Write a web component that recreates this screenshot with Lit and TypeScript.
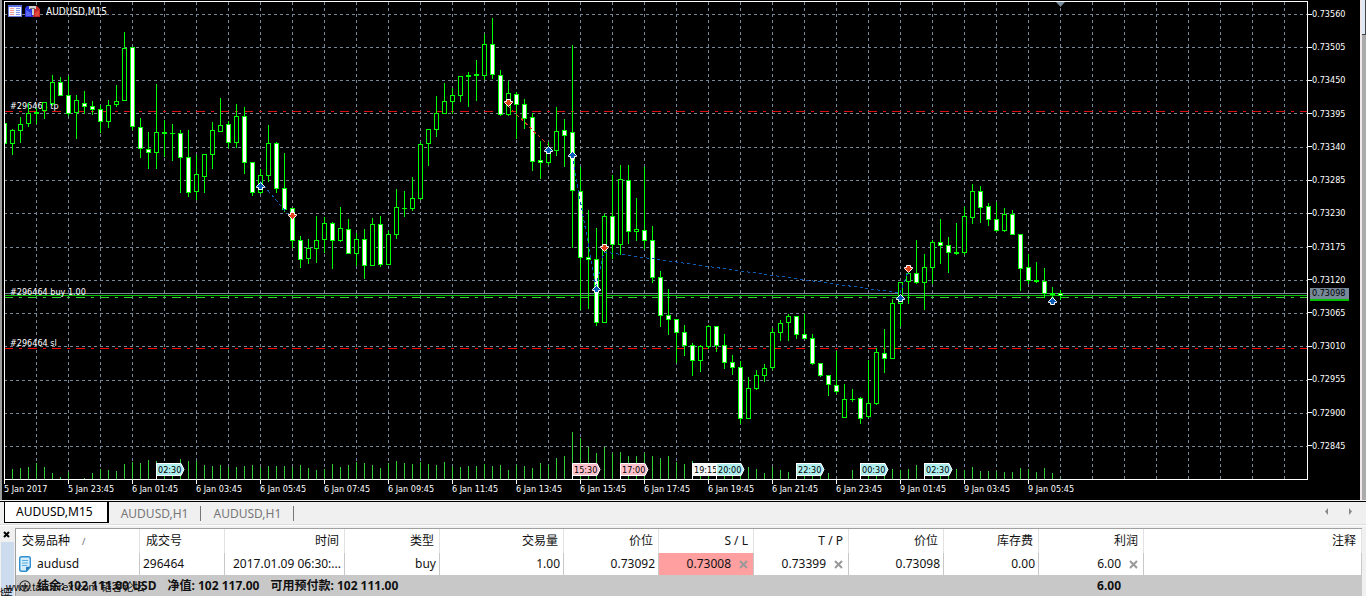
import { LitElement, html, svg, css } from "lit";
import { customElement, state } from "lit/decorators.js";

/** Candle: [high, body top, body bottom, low, kind]; w = bearish, h = bullish, d = doji. */
type Candle = [number, number, number, number, "w" | "h" | "d"];

const CANDLES: Candle[] = [
  [123, 123, 143, 143, "w"], [129, 130, 143, 154, "h"], [117, 124, 130, 142, "h"], [103, 113, 123, 126, "h"],
  [108, 112, 113, 123, "d"], [102, 102, 110, 118, "h"], [75, 82, 103, 105, "h"], [77, 82, 95, 95, "w"],
  [76, 95, 113, 115, "w"], [95, 100, 112, 138, "h"], [91, 103, 106, 113, "w"], [101, 106, 109, 114, "w"],
  [105, 109, 121, 132, "w"], [100, 105, 121, 127, "h"], [85, 101, 104, 106, "h"], [32, 48, 100, 100, "h"],
  [47, 47, 126, 129, "w"], [118, 127, 148, 157, "w"], [132, 149, 152, 168, "w"], [84, 132, 152, 168, "h"],
  [120, 132, 133, 156, "d"], [124, 133, 133, 160, "d"], [130, 133, 157, 192, "w"], [130, 157, 192, 196, "w"],
  [155, 174, 191, 199, "h"], [154, 154, 176, 192, "h"], [122, 130, 154, 168, "h"], [98, 125, 131, 131, "h"],
  [121, 124, 142, 147, "w"], [104, 116, 142, 147, "h"], [107, 116, 162, 173, "w"], [162, 162, 192, 195, "w"],
  [169, 175, 192, 193, "h"], [125, 143, 175, 181, "h"], [142, 143, 188, 192, "w"], [153, 188, 209, 211, "w"],
  [208, 208, 240, 247, "w"], [236, 240, 259, 267, "w"], [239, 248, 258, 263, "h"], [216, 240, 248, 262, "h"],
  [217, 223, 239, 252, "h"], [222, 223, 240, 268, "w"], [207, 228, 240, 241, "h"], [219, 229, 253, 253, "w"],
  [233, 239, 253, 265, "h"], [229, 239, 265, 278, "w"], [218, 224, 265, 265, "h"], [216, 224, 264, 266, "w"],
  [231, 234, 264, 264, "h"], [189, 207, 234, 238, "h"], [191, 208, 208, 216, "d"], [177, 198, 208, 210, "h"],
  [142, 144, 198, 199, "h"], [129, 129, 143, 165, "h"], [96, 113, 129, 136, "h"], [83, 101, 113, 113, "h"],
  [88, 95, 101, 113, "h"], [76, 76, 95, 101, "h"], [72, 75, 76, 106, "d"], [60, 74, 75, 100, "d"],
  [34, 44, 75, 79, "h"], [18, 44, 74, 78, "w"], [70, 75, 114, 115, "w"], [81, 93, 114, 115, "h"],
  [92, 94, 104, 138, "w"], [99, 104, 118, 128, "w"], [113, 117, 161, 170, "w"], [141, 160, 162, 178, "w"],
  [142, 150, 162, 164, "h"], [107, 131, 150, 155, "h"], [119, 130, 135, 166, "w"], [45, 132, 190, 247, "w"],
  [167, 191, 257, 309, "w"], [210, 257, 259, 308, "w"], [228, 259, 322, 325, "w"], [214, 216, 322, 322, "h"],
  [175, 216, 244, 258, "w"], [165, 179, 244, 254, "h"], [165, 180, 231, 243, "w"], [198, 229, 231, 240, "h"],
  [167, 230, 240, 248, "w"], [226, 240, 277, 282, "w"], [271, 277, 315, 326, "w"], [289, 315, 319, 334, "w"],
  [319, 319, 332, 362, "w"], [325, 332, 345, 355, "w"], [343, 345, 360, 375, "w"], [345, 346, 360, 371, "h"],
  [325, 326, 346, 348, "h"], [326, 326, 345, 351, "w"], [334, 345, 362, 368, "w"], [355, 362, 367, 374, "w"],
  [361, 367, 418, 423, "w"], [377, 388, 418, 418, "h"], [370, 375, 388, 389, "h"], [364, 368, 375, 381, "h"],
  [328, 332, 367, 369, "h"], [320, 323, 332, 340, "h"], [314, 316, 322, 340, "h"], [316, 316, 334, 338, "w"],
  [314, 334, 338, 338, "w"], [334, 338, 363, 364, "w"], [363, 363, 375, 376, "w"], [375, 375, 384, 395, "w"],
  [351, 385, 391, 393, "w"], [384, 399, 417, 417, "h"], [389, 399, 399, 401, "d"], [397, 398, 418, 423, "w"],
  [360, 403, 416, 417, "h"], [348, 352, 403, 404, "h"], [329, 353, 358, 372, "w"], [299, 303, 358, 358, "h"],
  [282, 282, 303, 326, "h"], [273, 273, 281, 303, "h"], [240, 273, 282, 283, "w"], [254, 267, 282, 309, "h"],
  [240, 242, 267, 283, "h"], [219, 242, 245, 263, "w"], [237, 245, 252, 272, "w"], [223, 252, 253, 254, "d"],
  [207, 216, 252, 254, "h"], [184, 191, 217, 223, "h"], [186, 191, 207, 222, "w"], [203, 206, 219, 225, "w"],
  [202, 219, 230, 231, "w"], [208, 214, 230, 231, "h"], [210, 214, 234, 234, "w"], [234, 234, 268, 290, "w"],
  [254, 267, 280, 283, "w"], [262, 280, 281, 282, "d"], [268, 281, 293, 297, "w"], [287, 293, 294, 298, "d"],
  [290, 293, 295, 299, "w"],
];

/** Top of each tick-volume bar, from the second candle on. */
const VOLUMES = [
  469, 468, 467, 463, 467, 473, 477, 472, 479, 478, 473, 469, 470, 471, 464, 462, 463, 460, 461, 465, 465, 459, 461,
  461, 465, 466, 465, 467, 467, 466, 465, 467, 466, 466, 466, 467, 465, 468, 470, 469, 464, 467, 465, 462, 463, 465,
  468, 463, 461, 463, 464, 462, 464, 465, 462, 466, 467, 466, 466, 464, 466, 465, 470, 465, 466, 468, 463, 465, 458,
  456, 432, 438, 447, 453, 447, 453, 452, 456, 456, 453, 456, 458, 456, 462, 464, 461, 465, 465, 465, 466, 466, 466,
  467, 469, 473, 467, 470, 472, 470, 470, 470, 476, 473, 479, 479, 470, 470, 470, 470, 470, 469, 470, 469, 465, 468,
  468, 468, 468, 469, 470, 467, 471, 471, 471, 472, 472, 468, 469, 472, 468, 473, 478,
];

const GRID_Y = [14, 47, 80, 113, 147, 180, 213, 247, 280, 313, 346, 380, 413, 446];

const PRICES = [
  "0.73560", "0.73505", "0.73450", "0.73395", "0.73340", "0.73285", "0.73230", "0.73175", "0.73120", "0.73065",
  "0.73010", "0.72955", "0.72900", "0.72845",
];

const TIMES = [
  "5 Jan 2017", "5 Jan 23:45", "6 Jan 01:45", "6 Jan 03:45", "6 Jan 05:45", "6 Jan 07:45", "6 Jan 09:45",
  "6 Jan 11:45", "6 Jan 13:45", "6 Jan 15:45", "6 Jan 17:45", "6 Jan 19:45", "6 Jan 21:45", "6 Jan 23:45",
  "9 Jan 01:45", "9 Jan 03:45", "9 Jan 05:45",
];

const FLAGS: [number, string, string][] = [
  [156, "02:30", "low"], [572, "15:30", "high"], [620, "17:00", "high"], [692, "19:15", "none"],
  [716, "20:00", "low"], [796, "22:30", "low"], [860, "00:30", "low"], [924, "02:30", "low"],
];

const DEALS: [number, number, "buy" | "sell"][] = [
  [260, 186, "buy"], [292, 215, "sell"], [508, 102, "sell"], [548, 150, "buy"], [572, 155, "buy"],
  [596, 289, "buy"], [604, 247, "sell"], [900, 298, "buy"], [908, 268, "sell"], [1052, 301, "buy"],
];

const LINKS: [number, number, number, number, "buy" | "sell"][] = [
  [260, 181, 292, 219, "buy"], [508, 106, 548, 145, "sell"], [572, 155, 596, 287, "buy"],
  [596, 287, 604, 252, "buy"], [604, 252, 900, 293, "buy"], [900, 293, 908, 272, "buy"],
];

const candle = ([high, top, bottom, low, kind]: Candle, i: number) => {
  const x = 4 + i * 8;
  return svg`
    <rect class="wick" x=${x} y=${high} width="1" height=${low - high + 1}></rect>
    ${kind === "d"
      ? svg`<rect class="wick" x=${x - 2} y=${top} width="5" height=${bottom - top + 1}></rect>`
      : svg`<rect class="wick" x=${x - 2} y=${top} width="5" height=${bottom - top + 1}></rect>
          <rect class=${kind === "w" ? "bear" : "bull"} x=${x - 1} y=${top + 1} width="3" height=${bottom - top - 1}></rect>`}`;
};

@customElement("price-chart")
export class PriceChart extends LitElement {
  static styles = css`
    :host { display: block; font: 9px/10px "DejaVu Sans Condensed", "DejaVu Sans", sans-serif; color: #fff; }
    .frame {
      display: grid; grid-template-columns: minmax(0, 1fr) 52px; grid-template-rows: auto 20px;
      background: #000; padding: 1px 0 0 2px; position: relative;
    }
    .plot { display: block; box-sizing: border-box; width: 100%; height: 479px; border: 1px solid #fff; }
    .grid { stroke: #778899; stroke-width: 1; stroke-dasharray: 3 3; }
    .take { stroke: #e01010; stroke-dasharray: 9 6 3 6; }
    .stop { stroke: #ff0000; stroke-dasharray: 9 6 3 6; }
    .entry { stroke: #32cd32; stroke-dasharray: 9 6 3 6; }
    .bid { stroke: #778899; }
    .ask { stroke: #00c000; }
    .wick { fill: #00ff00; }
    .bear { fill: #fff; }
    .bull { fill: #000; }
    .volume { fill: #32cd32; }
    .text { fill: #fff; }
    .title { font-size: 10px; }
    .flag-text { fill: #000; }
    .low { fill: #afeeee; }
    .high { fill: #ffc0cb; }
    .none { fill: #f8f8f8; }
    .flag { stroke: #fff; }
    .pole { fill: #fff; }
    .link { stroke-dasharray: 3 3; fill: none; }
    .link.buy { stroke: #0a5cb4; }
    .link.sell { stroke: #d2401e; }
    .deal { stroke: #fff; stroke-width: 1; }
    .deal.buy { fill: #0a5cb4; }
    .deal.sell { fill: #e0421c; }
    .shift { fill: #778899; }
    .prices { display: flex; flex-direction: column; justify-content: space-between; height: 442px; padding-top: 8px; }
    .price { display: flex; align-items: center; }
    .price::before { content: ""; width: 4px; height: 1px; background: #fff; }
    .now {
      position: absolute; top: 288px; right: 11px; width: 37px; padding-left: 2px; height: 11px; line-height: 11px;
      background: #778899; color: #000; border-bottom: 2px solid #00c000;
    }
    .times { display: grid; grid-auto-flow: column; grid-auto-columns: 64px; overflow: hidden; white-space: nowrap; }
    .time::before { content: ""; display: block; width: 1px; height: 4px; background: #fff; }
  `;

  render() {
    return html`
      <div class="frame">
        <svg class="plot" role="img" aria-label="AUDUSD,M15">
          <g transform="translate(-5 -2)">
            <g shape-rendering="crispEdges">
              ${GRID_Y.map((y) => svg`<line class="grid" x1="4" x2="200%" y1=${y + 0.5} y2=${y + 0.5}></line>`)}
              ${Array.from({ length: 80 }, (_, i) => 36.5 + i * 32).map(
                (x) => svg`<line class="grid" x1=${x} x2=${x} y1="2" y2="479"></line>`
              )}
              ${VOLUMES.map((y, i) => svg`<rect class="volume" x=${12 + i * 8} y=${y} width="1" height=${479 - y}></rect>`)}
              <line class="take" x1="4" x2="200%" y1="111.5" y2="111.5"></line>
              <line class="bid" x1="4" x2="200%" y1="293.5" y2="293.5"></line>
              <line class="ask" x1="4" x2="200%" y1="295.5" y2="295.5"></line>
              <line class="entry" x1="4" x2="200%" y1="297.5" y2="297.5"></line>
              <line class="stop" x1="4" x2="200%" y1="348.5" y2="348.5"></line>
            </g>
            <text class="text" x="10" y="109">#296464 tp</text>
            <text class="text" x="10" y="295">#296464 buy 1.00</text>
            <text class="text" x="10" y="346">#296464 sl</text>
            <g shape-rendering="crispEdges">
              ${CANDLES.map(candle)}
              ${LINKS.map(([x1, y1, x2, y2, side]) => svg`<line class="link ${side}" x1=${x1} y1=${y1} x2=${x2} y2=${y2}></line>`)}
            </g>
            ${DEALS.map(([x, y, side]) => svg`
              <path class="deal ${side}" transform="translate(${x + 0.5} ${y + 0.5}) scale(1 ${side === "buy" ? 1 : -1})"
                d="M0-4 L4 0 V1 H2 V3 H-2 V1 H-4 V0 Z"></path>`)}
            ${FLAGS.map(([x, label, tone]) => svg`
              <rect class="pole" x=${x} y="463" width="1" height="16"></rect>
              <path class="flag ${tone}" d="M${x + 0.5} 463.5 H${x + 25} L${x + 28} 469.5 L${x + 25} 475.5 H${x + 0.5} Z"></path>
              <text class="flag-text" x=${x + 2} y="473">${label}</text>`)}
            <path class="shift" d="M1056 2 H1065 L1060.5 7 Z"></path>
            <g>
              <rect x="8.5" y="5.5" width="13" height="11" fill="#f4f4ff" stroke="#6a7be0"></rect>
              <rect x="8" y="5" width="14" height="2" fill="#5a6ee0"></rect>
              <path d="M10 8.5h4M10 10.5h4M10 12.5h4M10 14.5h4" stroke="#f09a90"></path>
              <path d="M16 8.5h4M16 10.5h4M16 12.5h4M16 14.5h4" stroke="#7f95ee"></path>
            </g>
            <g>
              <path d="M25 8l2-2h6v11h-8z" fill="#2a35e0"></path>
              <path d="M33 6h4l3 3v8h-7z" fill="#c6282a"></path>
              <path d="M26 10l5 3v3h-5z" fill="#5c68f4"></path>
              <path d="M35 13l4-3v6h-4z" fill="#e0483c"></path>
              <path d="M29 6h7v3h-2v6h-2v-6h-3z" fill="#d0d0d0"></path>
              <path d="M30 8.5h5" stroke="#777"></path>
            </g>
            <text class="text title" x="46" y="15">AUDUSD,M15</text>
          </g>
        </svg>
        <div class="prices">${PRICES.map((p) => html`<div class="price">${p}</div>`)}</div>
        <div class="now">0.73098</div>
        <div class="times">${TIMES.map((t) => html`<div class="time">${t}</div>`)}</div>
      </div>
    `;
  }
}

@customElement("trade-terminal")
export class TradeTerminal extends LitElement {
  static styles = css`
    :host { display: flex; font: 12px/20px "Noto Sans", "Noto Sans CJK SC", sans-serif; color: #111; position: relative; overflow: hidden; }
    .side { width: 15px; display: flex; flex-direction: column; overflow: hidden; height: 72px; box-sizing: border-box; padding-top: 1px; }
    .close { border: 0; padding: 0 0 0 3px; background: none; height: 16px; display: flex; align-items: center; }
    .caption { flex: 1; min-height: 0; margin: 0 1px; background: #ccdcee; padding-top: 45px; }
    .caption-text { display: block; width: 12px; line-height: 12px; writing-mode: vertical-rl; text-orientation: sideways; transform: rotate(180deg); white-space: nowrap; }
    .table { flex: 1; min-width: 0; table-layout: fixed; border-collapse: separate; border-spacing: 0; background: #fff; border: 1px solid #a0a0a0; border-width: 1px 0 0 1px; margin: 3px 4px 0 0; width: 0; }
    .c85 { width: 85px; } .c95 { width: 95px; } .c105 { width: 105px; } .c120 { width: 120px; } .c124 { width: 124px; }
    th, td { box-sizing: border-box; padding: 0 3px; text-align: right; font-weight: 400; border-right: 1px solid #e2e2e2; white-space: nowrap; overflow: hidden; }
    th { height: 24px; padding: 0 5px 0 6px; }
    td { height: 20px; border-right-color: #c8c8c8; }
    .left { text-align: left; }
    .sort { padding-left: 12px; font-size: 9px; color: #666; }
    .symbol { display: flex; align-items: center; gap: 6px; }
    .value { display: flex; align-items: center; justify-content: flex-end; gap: 8px; padding-right: 2px; }
    .hit { background: #ff9f9f; }
    .remove { border: 0; background: none; padding: 0; width: 9px; height: 9px; display: block; }
    .icon { display: block; }
    .total { background: #c8c8c8; font-weight: 700; border: 0; height: 22px; }
    .sums { display: flex; align-items: center; gap: 6px; }
    .sum { white-space: nowrap; padding-right: 5px; }
    .profit { padding-right: 23px; }
    .mark { position: absolute; left: 6px; bottom: 0; font: 11px/20px "Liberation Sans", "Noto Sans CJK SC", sans-serif; }
  `;

  private cross() {
    return html`<svg class="icon" width="9" height="9" viewBox="0 0 9 9"><path d="M1 1L8 8M8 1L1 8" stroke="#999" stroke-width="2"></path></svg>`;
  }

  private removable(value: string, label: string) {
    return html`<div class="value"><span>${value}</span><button class="remove" aria-label=${label}>${this.cross()}</button></div>`;
  }

  render() {
    return html`
      <div class="side">
        <button class="close" aria-label="关闭">
          <svg class="icon" width="7" height="7" viewBox="0 0 7 7"><path d="M1 1L6 6M6 1L1 6" stroke="#000" stroke-width="2"></path></svg>
        </button>
        <div class="caption"><span class="caption-text">工具箱</span></div>
      </div>
      <table class="table">
        <colgroup>
          <col class="c124" /><col class="c85" /><col class="c120" /><col class="c95" /><col class="c124" /><col class="c95" />
          <col class="c95" /><col class="c95" /><col class="c95" /><col class="c95" /><col class="c105" /><col />
        </colgroup>
        <thead>
          <tr>
            <th class="left" scope="col">交易品种<span class="sort">/</span></th>
            <th class="left" scope="col">成交号</th>
            ${["时间", "类型", "交易量", "价位", "S / L", "T / P", "价位", "库存费", "利润", "注释"].map(
              (h) => html`<th scope="col">${h}</th>`
            )}
          </tr>
        </thead>
        <tbody>
          <tr>
            <td class="left">
              <div class="symbol">
                <svg class="icon" width="12" height="16" viewBox="0 0 12 16">
                  <path d="M2.5 .7H9.5Q11.3 .7 11.3 2.5V11L7.5 15.3H2.5Q.7 15.3 .7 13.5V2.5Q.7 .7 2.5 .7Z" fill="#d4ecfb" stroke="#2d8fd0" stroke-width="1.4"></path>
                  <path d="M7 15V11.5Q7 10.8 8 10.8H11.5Z" fill="#2478b8"></path>
                  <path d="M3 4.5h6M3 7h6M3 9.5h5" stroke="#58aee0"></path>
                </svg>
                <span>audusd</span>
              </div>
            </td>
            <td class="left">296464</td>
            <td>2017.01.09 06:30:...</td>
            <td>buy</td>
            <td>1.00</td>
            <td>0.73092</td>
            <td class="hit">${this.removable("0.73008", "S / L")}</td>
            <td>${this.removable("0.73399", "T / P")}</td>
            <td>0.73098</td>
            <td>0.00</td>
            <td>${this.removable("6.00", "利润")}</td>
            <td></td>
          </tr>
        </tbody>
        <tfoot>
          <tr>
            <td class="total left" colspan="10">
              <div class="sums">
                <svg class="icon" width="12" height="12" viewBox="0 0 12 12">
                  <circle cx="6" cy="6" r="5.2" fill="none" stroke="#333" stroke-width="1.2"></circle>
                  <path d="M6 3V9M3 6H9" stroke="#333" stroke-width="1.4"></path>
                </svg>
                <span class="sum">结余: 102 111.00 USD</span>
                <span class="sum">净值: 102 117.00</span>
                <span class="sum">可用预付款: 102 111.00</span>
              </div>
            </td>
            <td class="total profit">6.00</td>
            <td class="total"></td>
          </tr>
        </tfoot>
      </table>
      <span class="mark">www.talkforex.com 韬客论坛</span>
    `;
  }
}

@customElement("app-root")
export class AppRoot extends LitElement {
  static styles = css`
    :host { display: block; background: #f0f0f0; }
    .window { display: flex; background: #000; border-left: 2px solid #9c9c9c; }
    .window price-chart { flex: 1; min-width: 0; }
    .scroll { width: 4px; border-left: 2px solid #f0e8e8; background: #ababab; }
    .thumb { height: 34px; background: #dce8f6; border-right: 1px solid #444; border-bottom: 1px solid #444; }
    .rule { height: 1px; background: #000; margin-top: 1px; }
    .strip { border-bottom: 1px solid #ddd; padding-bottom: 1px; box-shadow: 0 1px #fff; }
    .tabs {
      display: flex; align-items: flex-start; height: 21px; background: #f0f0f0;
      font: 12px/19px "Noto Sans", sans-serif; padding: 0 12px 0 4px;
    }
    .tab { font: inherit; border: 0; background: none; color: #777; padding: 0 12px; line-height: 15px; margin-top: 4px; border-right: 1px solid #777; }
    .tab.active { background: #fff; color: #000; border: 1px solid #000; border-width: 0 2px 1px 1px; line-height: 20px; margin: 0; padding: 0 14px 0 11px; }
    .arrows { margin-left: auto; display: flex; gap: 15px; padding-top: 5px; }
    .arrow { border: 0; background: none; padding: 0; width: 8px; height: 9px; }
    .glyph { display: block; }
  `;

  @state() private active = 0;

  private tabs = ["AUDUSD,M15", "AUDUSD,H1", "AUDUSD,H1"];

  render() {
    return html`
      <div class="window">
        <price-chart></price-chart>
        <div class="scroll"><div class="thumb"></div></div>
      </div>
      <div class="rule"></div>
      <div class="strip">
        <div class="tabs" role="tablist">
          ${this.tabs.map(
            (t, i) => html`<button class="tab ${i === this.active ? "active" : ""}" role="tab"
              aria-selected=${i === this.active} @click=${() => (this.active = i)}>${t}</button>`
          )}
          <div class="arrows">
            <button class="arrow" aria-label="◂"><svg class="glyph" width="8" height="9"><path d="M5 1V8L2 4.5Z" fill="#888"></path></svg></button>
            <button class="arrow" aria-label="▸"><svg class="glyph" width="8" height="9"><path d="M3 1V8L6 4.5Z" fill="#888"></path></svg></button>
          </div>
        </div>
      </div>
      <trade-terminal></trade-terminal>
    `;
  }
}
